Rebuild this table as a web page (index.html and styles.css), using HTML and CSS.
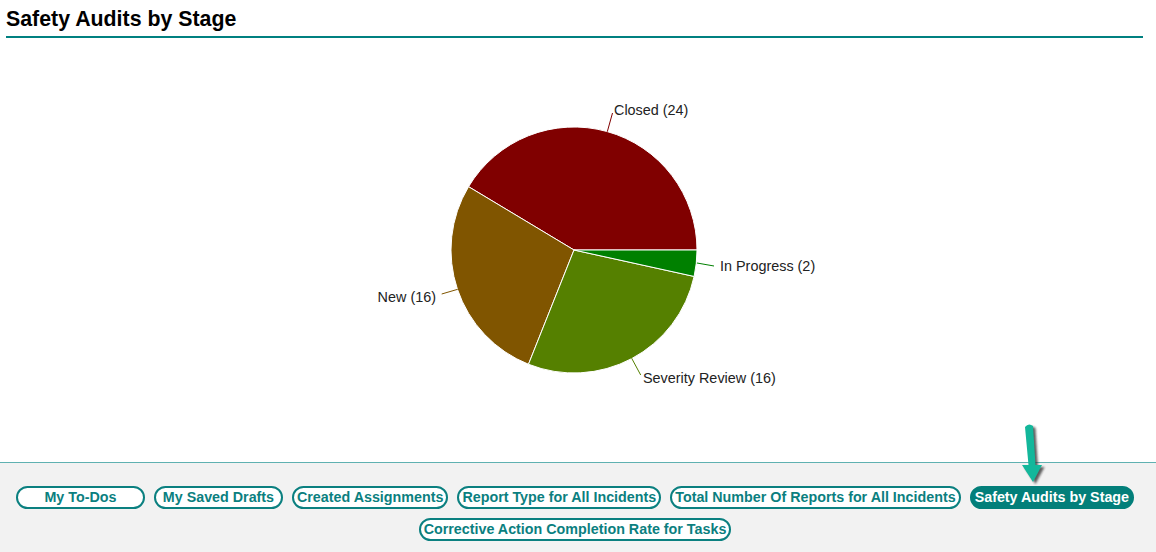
FILE: index.html
```html
<!DOCTYPE html>
<html lang="en">
<head>
<meta charset="utf-8">
<title>Safety Audits by Stage</title>
<link rel="stylesheet" href="styles.css">
</head>
<body>
<div class="page">
  <header class="header">
    <h1 class="title">Safety Audits by Stage</h1>
  </header>
  <div class="chart">
    <svg class="pie" width="1156" height="424" viewBox="0 38 1156 424" xmlns="http://www.w3.org/2000/svg">
      <g stroke="#ffffff" stroke-width="1">
        <path d="M574,250 L697,250 A123,123 0 0 0 468.55,186.67 Z" fill="#800000"/>
        <path d="M574,250 L468.55,186.67 A123,123 0 0 0 528.48,364.27 Z" fill="#805500"/>
        <path d="M574,250 L528.48,364.27 A123,123 0 0 0 694.12,276.44 Z" fill="#558000"/>
        <path d="M574,250 L694.12,276.44 A123,123 0 0 0 697,250 Z" fill="#008000"/>
      </g>
      <g stroke-width="1" fill="none">
        <line x1="607.3" y1="131.7" x2="612.5" y2="113" stroke="#800000"/>
        <line x1="697" y1="263" x2="714" y2="266" stroke="#008000"/>
        <line x1="441.7" y1="294" x2="457.7" y2="289.3" stroke="#805500"/>
        <line x1="631.7" y1="358.3" x2="640.7" y2="375" stroke="#558000"/>
      </g>
      <g class="labels">
        <text x="614" y="115">Closed (24)</text>
        <text x="720" y="271">In Progress (2)</text>
        <text x="436" y="302" text-anchor="end">New (16)</text>
        <text x="643" y="383">Severity Review (16)</text>
      </g>
    </svg>
  </div>
  <nav class="panel">
    <div class="tabs">
      <button class="tab">My To-Dos</button>
      <button class="tab">My Saved Drafts</button>
      <button class="tab">Created Assignments</button>
      <button class="tab">Report Type for All Incidents</button>
      <button class="tab">Total Number Of Reports for All Incidents</button>
      <button class="tab active">Safety Audits by Stage</button>
      <button class="tab">Corrective Action Completion Rate for Tasks</button>
    </div>
  </nav>
  <svg class="pointer" width="50" height="70" viewBox="0 0 50 70" xmlns="http://www.w3.org/2000/svg">
    <defs>
      <filter id="sh" x="-50%" y="-50%" width="200%" height="200%">
        <feGaussianBlur stdDeviation="1.2"/>
      </filter>
    </defs>
    <g transform="translate(2.5,2)" fill="#2b2b2b" opacity="0.75" filter="url(#sh)">
      <path d="M15,7 Q18.5,2.5 23,6 L25.5,45 L32,45 L23,62 L12,45 L18.5,45 Z"/>
    </g>
    <path d="M15,7 Q18.5,2.5 23,6 L25.5,45 L32,45 L23,62 L12,45 L18.5,45 Z" fill="#13b79b"/>
  </svg>
</div>
</body>
</html>
```

FILE: styles.css
```css
html, body {
  margin: 0;
  padding: 0;
  background: #ffffff;
}

body {
  font-family: "Liberation Sans", Arial, sans-serif;
  width: 1156px;
  height: 552px;
  overflow: hidden;
}

.page {
  position: relative;
  display: flex;
  flex-direction: column;
  height: 552px;
}

.header {
  margin: 0 13px 0 6px;
  padding-top: 7px;
  padding-bottom: 5px;
  border-bottom: 2px solid #008080;
}

.title {
  margin: 0;
  font-size: 21.33px;
  line-height: 24px;
  font-weight: bold;
  color: #000000;
}

.chart {
  height: 424px;
}

.pie {
  display: block;
}

.labels text {
  font-family: "Liberation Sans", Arial, sans-serif;
  font-size: 14.4px;
  fill: #222222;
}

.panel {
  flex: 1;
  background: #f2f2f2;
  border-top: 1px solid #5fb1b1;
  padding: 23px 6px 0 0;
}

.tabs {
  display: flex;
  flex-wrap: wrap;
  justify-content: center;
  column-gap: 9px;
  row-gap: 9px;
}

.tab {
  box-sizing: border-box;
  height: 23px;
  min-width: 129px;
  padding: 0 3px;
  border: 2px solid #0b8080;
  border-radius: 12px;
  background: #ffffff;
  color: #0b7f7f;
  font-family: "Liberation Sans", Arial, sans-serif;
  font-size: 14.3px;
  font-weight: bold;
  line-height: 19px;
  white-space: nowrap;
  cursor: pointer;
}

.tab.active {
  background: #037f7a;
  border-color: #037f7a;
  color: #ffffff;
}

.pointer {
  position: absolute;
  left: 1010px;
  top: 420px;
}
```
